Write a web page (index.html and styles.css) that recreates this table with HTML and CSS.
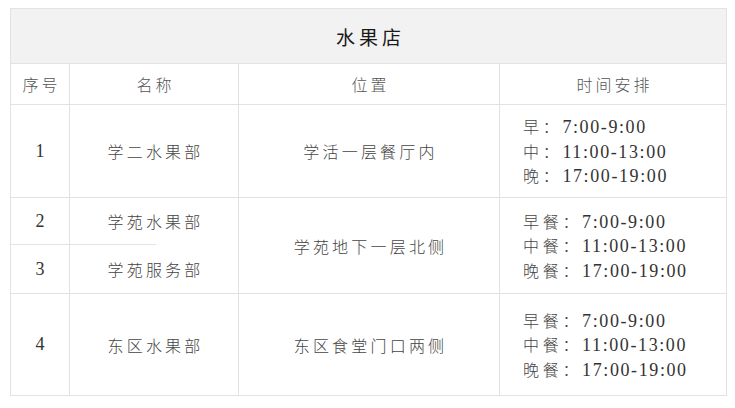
FILE: index.html
```html
<!DOCTYPE html>
<html lang="zh-CN">
<head>
<meta charset="utf-8">
<title>水果店</title>
<link rel="stylesheet" href="styles.css">
</head>
<body>
<div class="page">
<table class="shops">
  <colgroup>
    <col class="c-no"><col class="c-name"><col class="c-loc"><col class="c-time">
  </colgroup>
  <tr class="r-title"><th colspan="4" class="title">水果店</th></tr>
  <tr class="r-head">
    <td class="head">序号</td><td class="head">名称</td><td class="head">位置</td><td class="head">时间安排</td>
  </tr>
  <tr class="r-1">
    <td class="no">1</td><td class="cn">学二水果部</td><td class="cn">学活一层餐厅内</td>
    <td class="times">
      <div class="line"><span class="lbl">早：</span><span class="hr">7:00-9:00</span></div>
      <div class="line"><span class="lbl">中：</span><span class="hr">11:00-13:00</span></div>
      <div class="line"><span class="lbl">晚：</span><span class="hr">17:00-19:00</span></div>
    </td>
  </tr>
  <tr class="r-2">
    <td class="no split">2</td><td class="cn split-part">学苑水果部</td>
    <td class="cn" rowspan="2">学苑地下一层北侧</td>
    <td class="times" rowspan="2">
      <div class="line"><span class="lbl">早餐：</span><span class="hr">7:00-9:00</span></div>
      <div class="line"><span class="lbl">中餐：</span><span class="hr">11:00-13:00</span></div>
      <div class="line"><span class="lbl">晚餐：</span><span class="hr">17:00-19:00</span></div>
    </td>
  </tr>
  <tr class="r-3">
    <td class="no">3</td><td class="cn">学苑服务部</td>
  </tr>
  <tr class="r-4">
    <td class="no">4</td><td class="cn">东区水果部</td><td class="cn">东区食堂门口两侧</td>
    <td class="times">
      <div class="line"><span class="lbl">早餐：</span><span class="hr">7:00-9:00</span></div>
      <div class="line"><span class="lbl">中餐：</span><span class="hr">11:00-13:00</span></div>
      <div class="line"><span class="lbl">晚餐：</span><span class="hr">17:00-19:00</span></div>
    </td>
  </tr>
</table>
</div>
</body>
</html>
```
FILE: styles.css
```css
html, body {
  margin: 0;
  padding: 0;
  background: #ffffff;
}
.page {
  padding: 8px 0 0 10px;
}
.shops {
  border-collapse: collapse;
  table-layout: fixed;
  width: 716px;
  font-family: "Noto Sans CJK SC", sans-serif;
  color: #444;
}
.c-no { width: 59px; }
.c-name { width: 169px; }
.c-loc { width: 261px; }
.c-time { width: 227px; }
.shops th, .shops td {
  border: 1px solid #e2e2e2;
  padding: 0;
  text-align: center;
  vertical-align: middle;
}
.r-title { height: 55px; }
.r-head { height: 41px; }
.r-1 { height: 93px; }
.r-2 { height: 47px; }
.r-3 { height: 49px; }
.r-4 { height: 102px; }
.title {
  background: #f2f2f2;
  font-size: 19px;
  font-weight: 400;
  color: #1a1a1a;
  letter-spacing: 4px;
  text-indent: 4px;
}
.head {
  font-size: 16px;
  font-weight: 300;
  color: #555;
  letter-spacing: 3px;
  text-indent: 3px;
}
.cn {
  font-size: 16px;
  font-weight: 300;
  letter-spacing: 3.2px;
  text-indent: 3px;
}
.no {
  font-family: "Liberation Serif", serif;
  font-size: 18px;
  color: #333;
}
.shops .r-2 .split {
  border-bottom: 1px solid #e2e2e2;
}
.shops .r-2 .split-part {
  border-bottom: 0;
  background: linear-gradient(#e2e2e2, #e2e2e2) no-repeat left bottom / 86px 1px;
}
.shops .r-3 td {
  border-top: 0;
}
.shops .r-3 .no {
  border-top: 1px solid #e2e2e2;
}
.shops .times {
  text-align: left;
  padding-left: 23px;
}
.line {
  height: 24.5px;
  line-height: 24.5px;
  white-space: nowrap;
}
.lbl {
  font-size: 16px;
  font-weight: 300;
  letter-spacing: 3.7px;
}
.hr {
  font-family: "Liberation Serif", serif;
  font-size: 18px;
  letter-spacing: 1.6px;
  color: #333;
}
```
